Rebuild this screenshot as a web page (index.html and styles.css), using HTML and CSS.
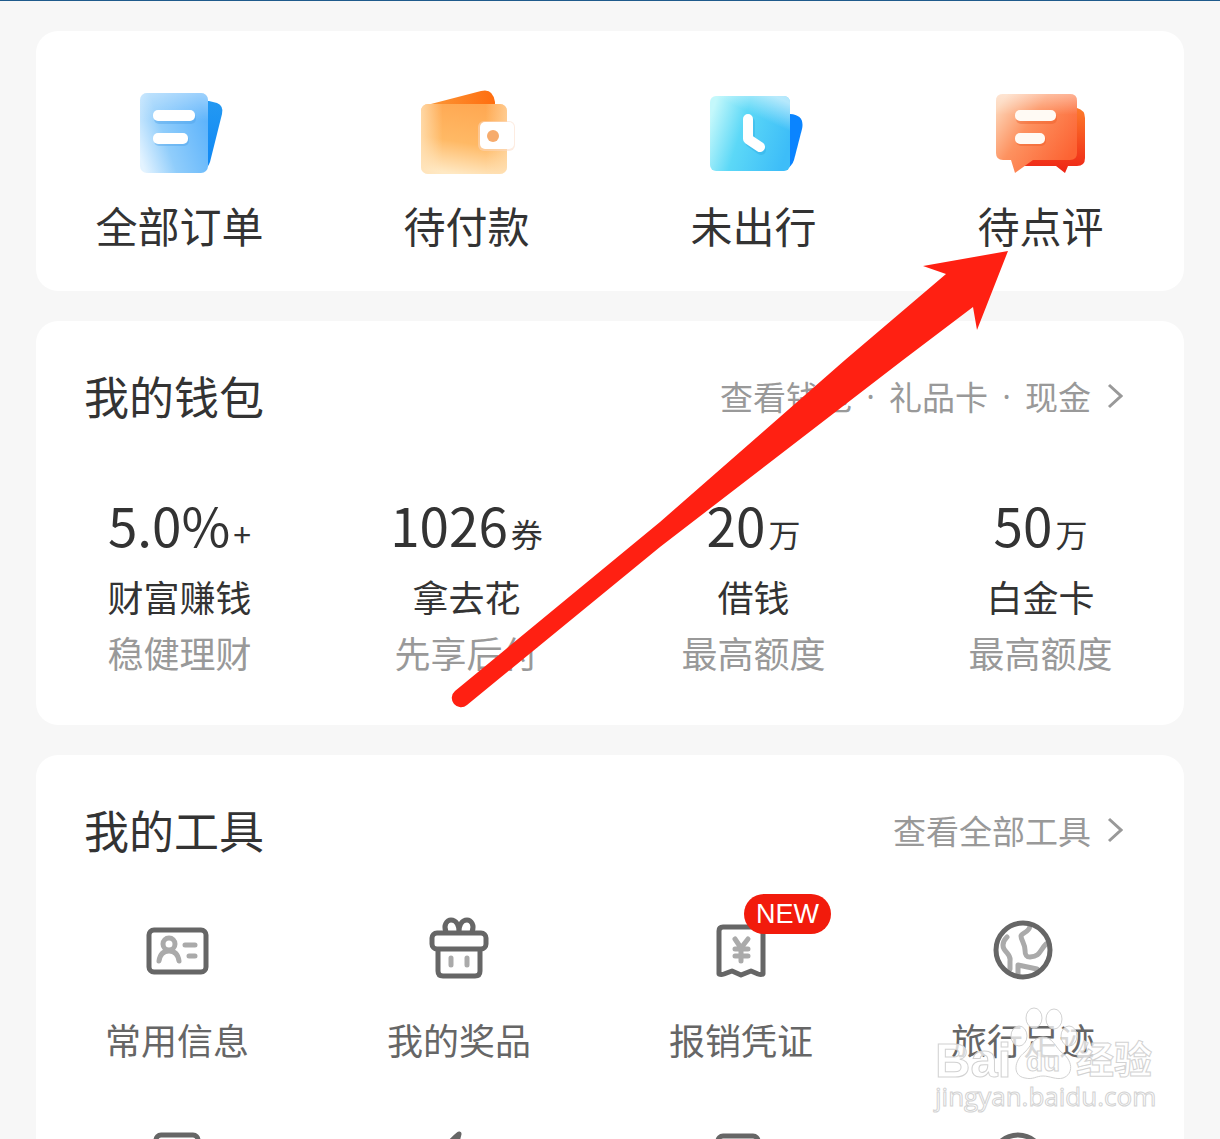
FILE: index.html
```html
<!DOCTYPE html>
<html lang="zh-CN">
<head>
    <meta charset="UTF-8">
    <meta name="viewport" content="width=device-width, initial-scale=1.0">
    <title>我的</title>
    <link rel="stylesheet" href="styles.css">
</head>
<body>

    <main class="page">

        <!-- Orders -->
        <nav class="card orders">
            <a href="#" class="order">
                <svg class="order-icon" viewBox="0 0 100 90">
                    <defs>
                        <linearGradient id="listFront" x1="0" y1="0.8" x2="1" y2="0.4">
                            <stop offset="0" stop-color="#e3f3ff"/>
                            <stop offset="0.4" stop-color="#90cdfb"/>
                            <stop offset="1" stop-color="#5fb4fb"/>
                        </linearGradient>
                        <linearGradient id="topShine" x1="0" y1="0" x2="0" y2="1">
                            <stop offset="0" stop-color="#fff" stop-opacity="0.4"/>
                            <stop offset="0.35" stop-color="#fff" stop-opacity="0"/>
                        </linearGradient>
                        <linearGradient id="listBack" x1="0" y1="0" x2="0" y2="1">
                            <stop offset="0" stop-color="#2499f2"/>
                            <stop offset="1" stop-color="#0c86f5"/>
                        </linearGradient>
                    </defs>
                    <path d="M70 13H79L87 15Q94 18 92 26L80 74Q78 80 72 84Z" fill="url(#listBack)"/>
                    <rect x="10" y="5" width="68" height="80" rx="7" fill="url(#listFront)"/>
                    <rect x="10" y="5" width="68" height="80" rx="7" fill="url(#topShine)"/>
                    <rect x="24" y="25" width="42" height="11" rx="5" fill="#4a9fe8" opacity="0.4"/>
                    <rect x="24" y="47" width="35" height="11" rx="5" fill="#4a9fe8" opacity="0.4"/>
                    <rect x="23" y="22" width="42" height="11" rx="5" fill="#fff"/>
                    <rect x="23" y="45" width="35" height="11" rx="5" fill="#fff"/>
                </svg>
                <span>全部订单</span>
            </a>
            <a href="#" class="order">
                <svg class="order-icon" viewBox="0 0 100 90">
                    <defs>
                        <linearGradient id="walletFront" x1="0.6" y1="0" x2="0.4" y2="1">
                            <stop offset="0" stop-color="#ffa852"/>
                            <stop offset="0.55" stop-color="#ffb965"/>
                            <stop offset="1" stop-color="#ffe9c4"/>
                        </linearGradient>
                        <linearGradient id="walletSide" x1="0" y1="0" x2="1" y2="0">
                            <stop offset="0" stop-color="#ffe2b8" stop-opacity="0.8"/>
                            <stop offset="0.25" stop-color="#ffe2b8" stop-opacity="0"/>
                            <stop offset="0.75" stop-color="#ffe2b8" stop-opacity="0"/>
                            <stop offset="1" stop-color="#ffe2b8" stop-opacity="0.6"/>
                        </linearGradient>
                        <linearGradient id="walletFlap" x1="0" y1="0" x2="1" y2="0">
                            <stop offset="0" stop-color="#fb9838"/>
                            <stop offset="1" stop-color="#ff6d0f"/>
                        </linearGradient>
                    </defs>
                    <path d="M10 17L64 3Q76 0 78 14V20H10Z" fill="url(#walletFlap)"/>
                    <rect x="4" y="16" width="86" height="70" rx="7" fill="url(#walletFront)"/>
                    <rect x="4" y="16" width="86" height="70" rx="7" fill="url(#walletSide)"/>
                    <rect x="61" y="33" width="37" height="30" rx="6" fill="#fbd9c4" opacity="0.5"/>
                    <rect x="63" y="34" width="34" height="27" rx="5" fill="#fff"/>
                    <circle cx="76" cy="48" r="6" fill="#f6ab6c"/>
                </svg>
                <span>待付款</span>
            </a>
            <a href="#" class="order">
                <svg class="order-icon" viewBox="0 0 100 90">
                    <defs>
                        <linearGradient id="tripFront" x1="0" y1="0.3" x2="1" y2="0.6">
                            <stop offset="0" stop-color="#c4f8fb"/>
                            <stop offset="0.4" stop-color="#5cd8f7"/>
                            <stop offset="1" stop-color="#3dbdf8"/>
                        </linearGradient>
                        <linearGradient id="tripShine" x1="0.3" y1="1" x2="0.8" y2="0">
                            <stop offset="0.7" stop-color="#fff" stop-opacity="0"/>
                            <stop offset="1" stop-color="#fff" stop-opacity="0.6"/>
                        </linearGradient>
                    </defs>
                    <path d="M80 26H86Q101 27 98 41L90 72Q88 79 80 82Z" fill="#0a84ff"/>
                    <rect x="6" y="8" width="80" height="75" rx="6" fill="url(#tripFront)"/>
                    <rect x="6" y="8" width="80" height="75" rx="6" fill="url(#tripShine)"/>
                    <path d="M46 34V54L57 62" fill="none" stroke="#27a5e0" stroke-opacity="0.35" stroke-width="10" stroke-linecap="round" stroke-linejoin="round"/>
                    <path d="M44 31V51L56 59" fill="none" stroke="#fff" stroke-width="10" stroke-linecap="round" stroke-linejoin="round"/>
                </svg>
                <span>未出行</span>
            </a>
            <a href="#" class="order">
                <svg class="order-icon" viewBox="0 0 100 90">
                    <defs>
                        <linearGradient id="chatFront" x1="0" y1="0.2" x2="0.9" y2="0.8">
                            <stop offset="0" stop-color="#fdd3b5"/>
                            <stop offset="0.4" stop-color="#fd9260"/>
                            <stop offset="1" stop-color="#fc6434"/>
                        </linearGradient>
                        <linearGradient id="chatBack" x1="0" y1="0" x2="0" y2="1">
                            <stop offset="0" stop-color="#fd7a2a"/>
                            <stop offset="1" stop-color="#ee2416"/>
                        </linearGradient>
                    </defs>
                    <path d="M30 20H86Q94 22 94 30V70Q94 78 86 78H77L74 85L65 78H30Z" fill="url(#chatBack)"/>
                    <path d="M12 6H79Q86 6 86 13V65Q86 72 79 72H42L24 85L20 72H12Q5 72 5 65V13Q5 6 12 6Z" fill="url(#chatFront)"/>
                    <path d="M12 6H79Q86 6 86 13V65H5V13Q5 6 12 6Z" fill="url(#topShine)"/>
                    <rect x="25" y="25" width="41" height="11" rx="5" fill="#e8541c" opacity="0.35"/>
                    <rect x="25" y="47" width="30" height="11" rx="5" fill="#e8541c" opacity="0.35"/>
                    <rect x="24" y="22" width="41" height="11" rx="5" fill="#fffaf4"/>
                    <rect x="24" y="45" width="30" height="11" rx="5" fill="#fffaf4"/>
                </svg>
                <span>待点评</span>
            </a>
        </nav>

        <!-- Wallet -->
        <section class="card">
            <header class="card-header">
                <h2>我的钱包</h2>
                <a href="#" class="more">
                    <span>查看钱包</span><span class="dot">·</span><span>礼品卡</span><span class="dot">·</span><span>现金</span>
                    <svg class="chevron" viewBox="0 0 16 26"><path d="M2 2L14 13L2 24"/></svg>
                </a>
            </header>
            <div class="wallet">
                <a href="#" class="asset">
                    <span class="value">5.0%<small>+</small></span>
                    <span class="name">财富赚钱</span>
                    <span class="note">稳健理财</span>
                </a>
                <a href="#" class="asset">
                    <span class="value">1026<small>券</small></span>
                    <span class="name">拿去花</span>
                    <span class="note">先享后付</span>
                </a>
                <a href="#" class="asset">
                    <span class="value">20<small>万</small></span>
                    <span class="name">借钱</span>
                    <span class="note">最高额度</span>
                </a>
                <a href="#" class="asset">
                    <span class="value">50<small>万</small></span>
                    <span class="name">白金卡</span>
                    <span class="note">最高额度</span>
                </a>
            </div>
        </section>

        <!-- Tools -->
        <section class="card">
            <header class="card-header">
                <h2>我的工具</h2>
                <a href="#" class="more">
                    <span>查看全部工具</span>
                    <svg class="chevron" viewBox="0 0 16 26"><path d="M2 2L14 13L2 24"/></svg>
                </a>
            </header>
            <div class="tools">
                <a href="#" class="tool">
                    <span class="tool-icon">
                        <svg viewBox="0 0 64 64">
                            <rect x="4" y="12" width="57" height="42" rx="5"/>
                            <g class="light">
                                <circle cx="24" cy="26" r="6"/>
                                <path d="M14 43C15 36 19 33 24 33S33 36 34 43M40 27H50M44 38H50"/>
                            </g>
                        </svg>
                    </span>
                    <span>常用信息</span>
                </a>
                <a href="#" class="tool">
                    <span class="tool-icon">
                        <svg viewBox="0 0 64 64">
                            <rect x="5" y="15" width="54" height="16" rx="5"/>
                            <path d="M11 32V53Q11 58 16 58H48Q53 58 53 53V32"/>
                            <path d="M19 14C16 7 20 2 24 2C29 2 32 7 32 14C32 7 35 2 40 2C44 2 48 7 45 14"/>
                            <path class="light" d="M24 40V47M40 40V47"/>
                        </svg>
                    </span>
                    <span>我的奖品</span>
                </a>
                <a href="#" class="tool">
                    <span class="tool-icon">
                        <svg viewBox="0 0 64 64">
                            <path d="M10 56V13Q10 9 14 9H50Q54 9 54 13V56Q52 57 49 56L42 53L32 57L23 53L15 56Q12 57 10 56Z"/>
                            <path class="light" d="M26 21L32 30L39 21M26 31H39M26 38H39M32 30V43"/>
                        </svg>
                        <b class="badge">NEW</b>
                    </span>
                    <span>报销凭证</span>
                </a>
                <a href="#" class="tool">
                    <span class="tool-icon">
                        <svg viewBox="0 0 64 64">
                            <path class="light" d="M39 8C38 15 30 15 30 18C30 22 34 26 34 32C34 37 35 39 39 39C50 38 48 33 55 26M16 19C12 23 11 27 13 31C16 36 20 37 19 43V51M27 56V47L46 51"/>
                            <circle cx="32" cy="32" r="27"/>
                        </svg>
                    </span>
                    <span>旅行足迹</span>
                </a>
                <a href="#" class="tool" aria-label="订单">
                    <span class="tool-icon">
                        <svg viewBox="0 0 64 64">
                            <rect x="11" y="7" width="42" height="52" rx="5"/>
                        </svg>
                    </span>
                </a>
                <a href="#" class="tool" aria-label="环保">
                    <span class="tool-icon">
                        <svg viewBox="0 0 64 64">
                            <path d="M32 6Q14 20 14 38Q14 57 32 57Q50 57 50 38Q50 30 44 24Q38 30 32 28Q28 20 32 6Z"/>
                        </svg>
                    </span>
                </a>
                <a href="#" class="tool" aria-label="票据">
                    <span class="tool-icon">
                        <svg viewBox="0 0 64 64">
                            <rect x="9" y="8" width="40" height="50" rx="5"/>
                        </svg>
                    </span>
                </a>
                <a href="#" class="tool" aria-label="客服">
                    <span class="tool-icon">
                        <svg viewBox="0 0 64 64">
                            <circle cx="27" cy="33" r="26"/>
                        </svg>
                    </span>
                </a>
            </div>
        </section>

        <!-- Pointer to 待点评 -->
        <svg class="pointer" viewBox="0 0 560 460" aria-hidden="true">
            <path d="M558 1L473 16L496 24L395 110L210 272L5 441A9 9 0 0 0 17 455L210 297L453 110L523 57L527 80Z"/>
        </svg>

        <!-- Watermark -->
        <svg class="watermark" viewBox="0 0 230 110">
            <g class="mark">
                <text class="brand" x="0" y="77">Bai</text>
                <ellipse cx="99" cy="18" rx="8" ry="10"/>
                <ellipse cx="119" cy="19" rx="8" ry="10"/>
                <ellipse cx="84" cy="36" rx="8" ry="10"/>
                <ellipse cx="134" cy="36" rx="8" ry="10"/>
                <path d="M108 37C99 37 96 46 90 52C79 60 77 76 90 78C98 80 101 76 108 76S121 80 128 78C139 74 138 60 126 52C120 46 117 37 108 37Z"/>
                <text class="du" x="91" y="71">du</text>
                <text class="brand-cn" x="141" y="73">经验</text>
                <text class="url" x="0" y="106">jingyan.baidu.com</text>
            </g>
        </svg>

    </main>

</body>
</html>
```
FILE: styles.css
```css
* {
    box-sizing: border-box;
}
body {
    margin: 0;
    background: #f7f7f7;
    font-family: "Noto Sans CJK SC", "Noto Sans", sans-serif;
    color: #333;
}
a {
    color: inherit;
    text-decoration: none;
}
.page {
    position: relative;
    height: 100vh;
    overflow: hidden;
    display: flex;
    flex-direction: column;
    gap: 30px;
    padding: 30px 36px 0;
    border-top: 1px solid #1f5b8c;
}
.card {
    flex: none;
    background: #fff;
    border-radius: 22px;
}

/* Orders */
.orders {
    display: grid;
    grid-template-columns: repeat(4, 1fr);
    padding: 57px 0 37px;
}
.order {
    display: flex;
    flex-direction: column;
    align-items: center;
    gap: 18px;
    font-size: 42px;
    line-height: 58px;
}
.order-icon {
    width: 100px;
    height: 90px;
}

/* Card header */
.card-header {
    display: flex;
    justify-content: space-between;
    align-items: center;
    padding: 43px 61px 0 48px;
}
h2 {
    margin: 0;
    font-size: 45px;
    font-weight: 400;
    line-height: 64px;
}
.more {
    display: flex;
    align-items: center;
    font-size: 33px;
    line-height: 48px;
    color: #999;
}
.dot {
    width: 37px;
    font-family: "Open Sans", sans-serif;
    text-align: center;
}
.chevron {
    width: 16px;
    height: 26px;
    margin-left: 16px;
    fill: none;
    stroke: #999;
    stroke-width: 3;
}

/* Wallet */
.wallet {
    display: grid;
    grid-template-columns: repeat(4, 1fr);
    padding: 60px 0 45px;
}
.asset {
    display: flex;
    flex-direction: column;
    align-items: center;
    font-size: 36px;
    line-height: 56px;
}
.value {
    margin-bottom: 8px;
    font-size: 53px;
    line-height: 72px;
}
.value small {
    margin-left: 3px;
    font-size: 32px;
    line-height: 40px;
}
.note {
    color: #999;
}

/* Tools */
.tools {
    display: grid;
    grid-template-columns: repeat(4, 1fr);
    row-gap: 61px;
    padding: 56px 20px 40px 0;
}
.tool {
    display: flex;
    flex-direction: column;
    align-items: center;
    gap: 29px;
    font-size: 36px;
    line-height: 56px;
    color: #666;
}
.tool-icon {
    position: relative;
    width: 64px;
    height: 64px;
}
.tool-icon svg {
    display: block;
    width: 64px;
    height: 64px;
    fill: none;
    stroke: #666;
    stroke-width: 5;
    stroke-linejoin: round;
    overflow: visible;
}
.tool-icon .light {
    stroke: #aaa;
    stroke-linecap: round;
}
.badge {
    position: absolute;
    left: 35px;
    top: -24px;
    width: 87px;
    height: 40px;
    border-radius: 20px;
    background: #f21b0c;
    color: #fff;
    font-family: "Liberation Sans", sans-serif;
    font-size: 27px;
    font-weight: 400;
    line-height: 40px;
    text-align: center;
}

/* Overlays */
.pointer {
    position: absolute;
    left: 450px;
    top: 249px;
    width: 560px;
    height: 460px;
    fill: #ff2012;
    pointer-events: none;
}
.watermark {
    position: absolute;
    right: 55px;
    top: 999px;
    width: 230px;
    height: 110px;
    overflow: visible;
    pointer-events: none;
}
.mark {
    fill: #fff;
    fill-opacity: 0.75;
    stroke: #d2d2d2;
    stroke-width: 1;
}
.brand {
    font: bold 49px "Liberation Sans", sans-serif;
}
.du {
    font: bold 28px "Liberation Sans", sans-serif;
}
.brand-cn {
    font: bold 38px "Noto Sans CJK SC", sans-serif;
}
.url {
    font: 26px "Open Sans", sans-serif;
}
```
